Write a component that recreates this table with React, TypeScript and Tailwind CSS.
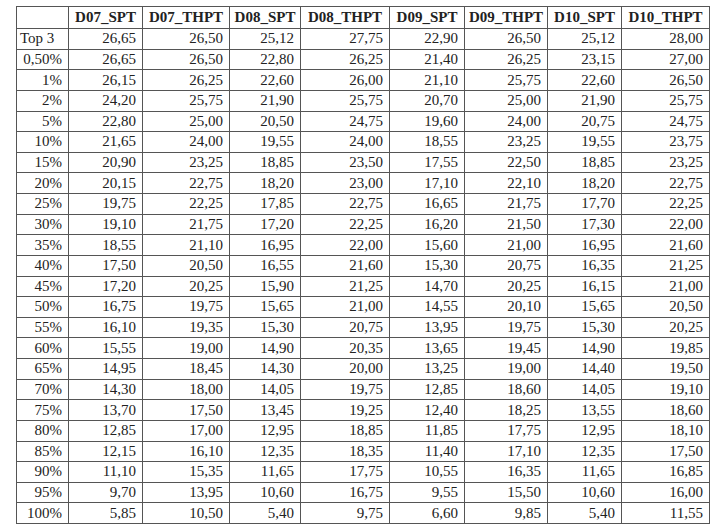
const headers = ['D07_SPT', 'D07_THPT', 'D08_SPT', 'D08_THPT', 'D09_SPT', 'D09_THPT', 'D10_SPT', 'D10_THPT']
const colWidths = ['w-[74px]', 'w-[87px]', 'w-[71px]', 'w-[89px]', 'w-[75px]', 'w-[83px]', 'w-[74px]', 'w-[88px]']

const rows: [string, string[]][] = [
  ['Top 3', ['26,65', '26,50', '25,12', '27,75', '22,90', '26,50', '25,12', '28,00']],
  ['0,50%', ['26,65', '26,50', '22,80', '26,25', '21,40', '26,25', '23,15', '27,00']],
  ['1%', ['26,15', '26,25', '22,60', '26,00', '21,10', '25,75', '22,60', '26,50']],
  ['2%', ['24,20', '25,75', '21,90', '25,75', '20,70', '25,00', '21,90', '25,75']],
  ['5%', ['22,80', '25,00', '20,50', '24,75', '19,60', '24,00', '20,75', '24,75']],
  ['10%', ['21,65', '24,00', '19,55', '24,00', '18,55', '23,25', '19,55', '23,75']],
  ['15%', ['20,90', '23,25', '18,85', '23,50', '17,55', '22,50', '18,85', '23,25']],
  ['20%', ['20,15', '22,75', '18,20', '23,00', '17,10', '22,10', '18,20', '22,75']],
  ['25%', ['19,75', '22,25', '17,85', '22,75', '16,65', '21,75', '17,70', '22,25']],
  ['30%', ['19,10', '21,75', '17,20', '22,25', '16,20', '21,50', '17,30', '22,00']],
  ['35%', ['18,55', '21,10', '16,95', '22,00', '15,60', '21,00', '16,95', '21,60']],
  ['40%', ['17,50', '20,50', '16,55', '21,60', '15,30', '20,75', '16,35', '21,25']],
  ['45%', ['17,20', '20,25', '15,90', '21,25', '14,70', '20,25', '16,15', '21,00']],
  ['50%', ['16,75', '19,75', '15,65', '21,00', '14,55', '20,10', '15,65', '20,50']],
  ['55%', ['16,10', '19,35', '15,30', '20,75', '13,95', '19,75', '15,30', '20,25']],
  ['60%', ['15,55', '19,00', '14,90', '20,35', '13,65', '19,45', '14,90', '19,85']],
  ['65%', ['14,95', '18,45', '14,30', '20,00', '13,25', '19,00', '14,40', '19,50']],
  ['70%', ['14,30', '18,00', '14,05', '19,75', '12,85', '18,60', '14,05', '19,10']],
  ['75%', ['13,70', '17,50', '13,45', '19,25', '12,40', '18,25', '13,55', '18,60']],
  ['80%', ['12,85', '17,00', '12,95', '18,85', '11,85', '17,75', '12,95', '18,10']],
  ['85%', ['12,15', '16,10', '12,35', '18,35', '11,40', '17,10', '12,35', '17,50']],
  ['90%', ['11,10', '15,35', '11,65', '17,75', '10,55', '16,35', '11,65', '16,85']],
  ['95%', ['9,70', '13,95', '10,60', '16,75', '9,55', '15,50', '10,60', '16,00']],
  ['100%', ['5,85', '10,50', '5,40', '9,75', '6,60', '9,85', '5,40', '11,55']],
]

export default function App() {
  return (
    <div className="w-[720px] h-[527px] bg-white pt-[6px] pl-[16px] font-['Liberation_Serif',serif] text-[15px] text-[#222]">
      <table className="table-fixed border-collapse w-[694px] border border-[#555]">
        <colgroup>
          <col className="w-[52px]" />
          {colWidths.map((w, i) => (
            <col key={i} className={w} />
          ))}
        </colgroup>
        <thead>
          <tr className="h-[22px]">
            <th className="border border-[#555]" />
            {headers.map((h) => (
              <th key={h} className="border border-[#555] font-bold text-center px-0 leading-none">
                {h}
              </th>
            ))}
          </tr>
        </thead>
        <tbody>
          {rows.map(([label, vals]) => (
            <tr key={label} className="h-[20.625px]">
              <td className={`border border-[#555] leading-none ${label === 'Top 3' ? 'text-left pl-[3px]' : 'text-right pr-[6px]'}`}>
                {label}
              </td>
              {vals.map((v, i) => (
                <td key={i} className="border border-[#555] text-right pr-[6px] leading-none">
                  {v}
                </td>
              ))}
            </tr>
          ))}
        </tbody>
      </table>
    </div>
  )
}
